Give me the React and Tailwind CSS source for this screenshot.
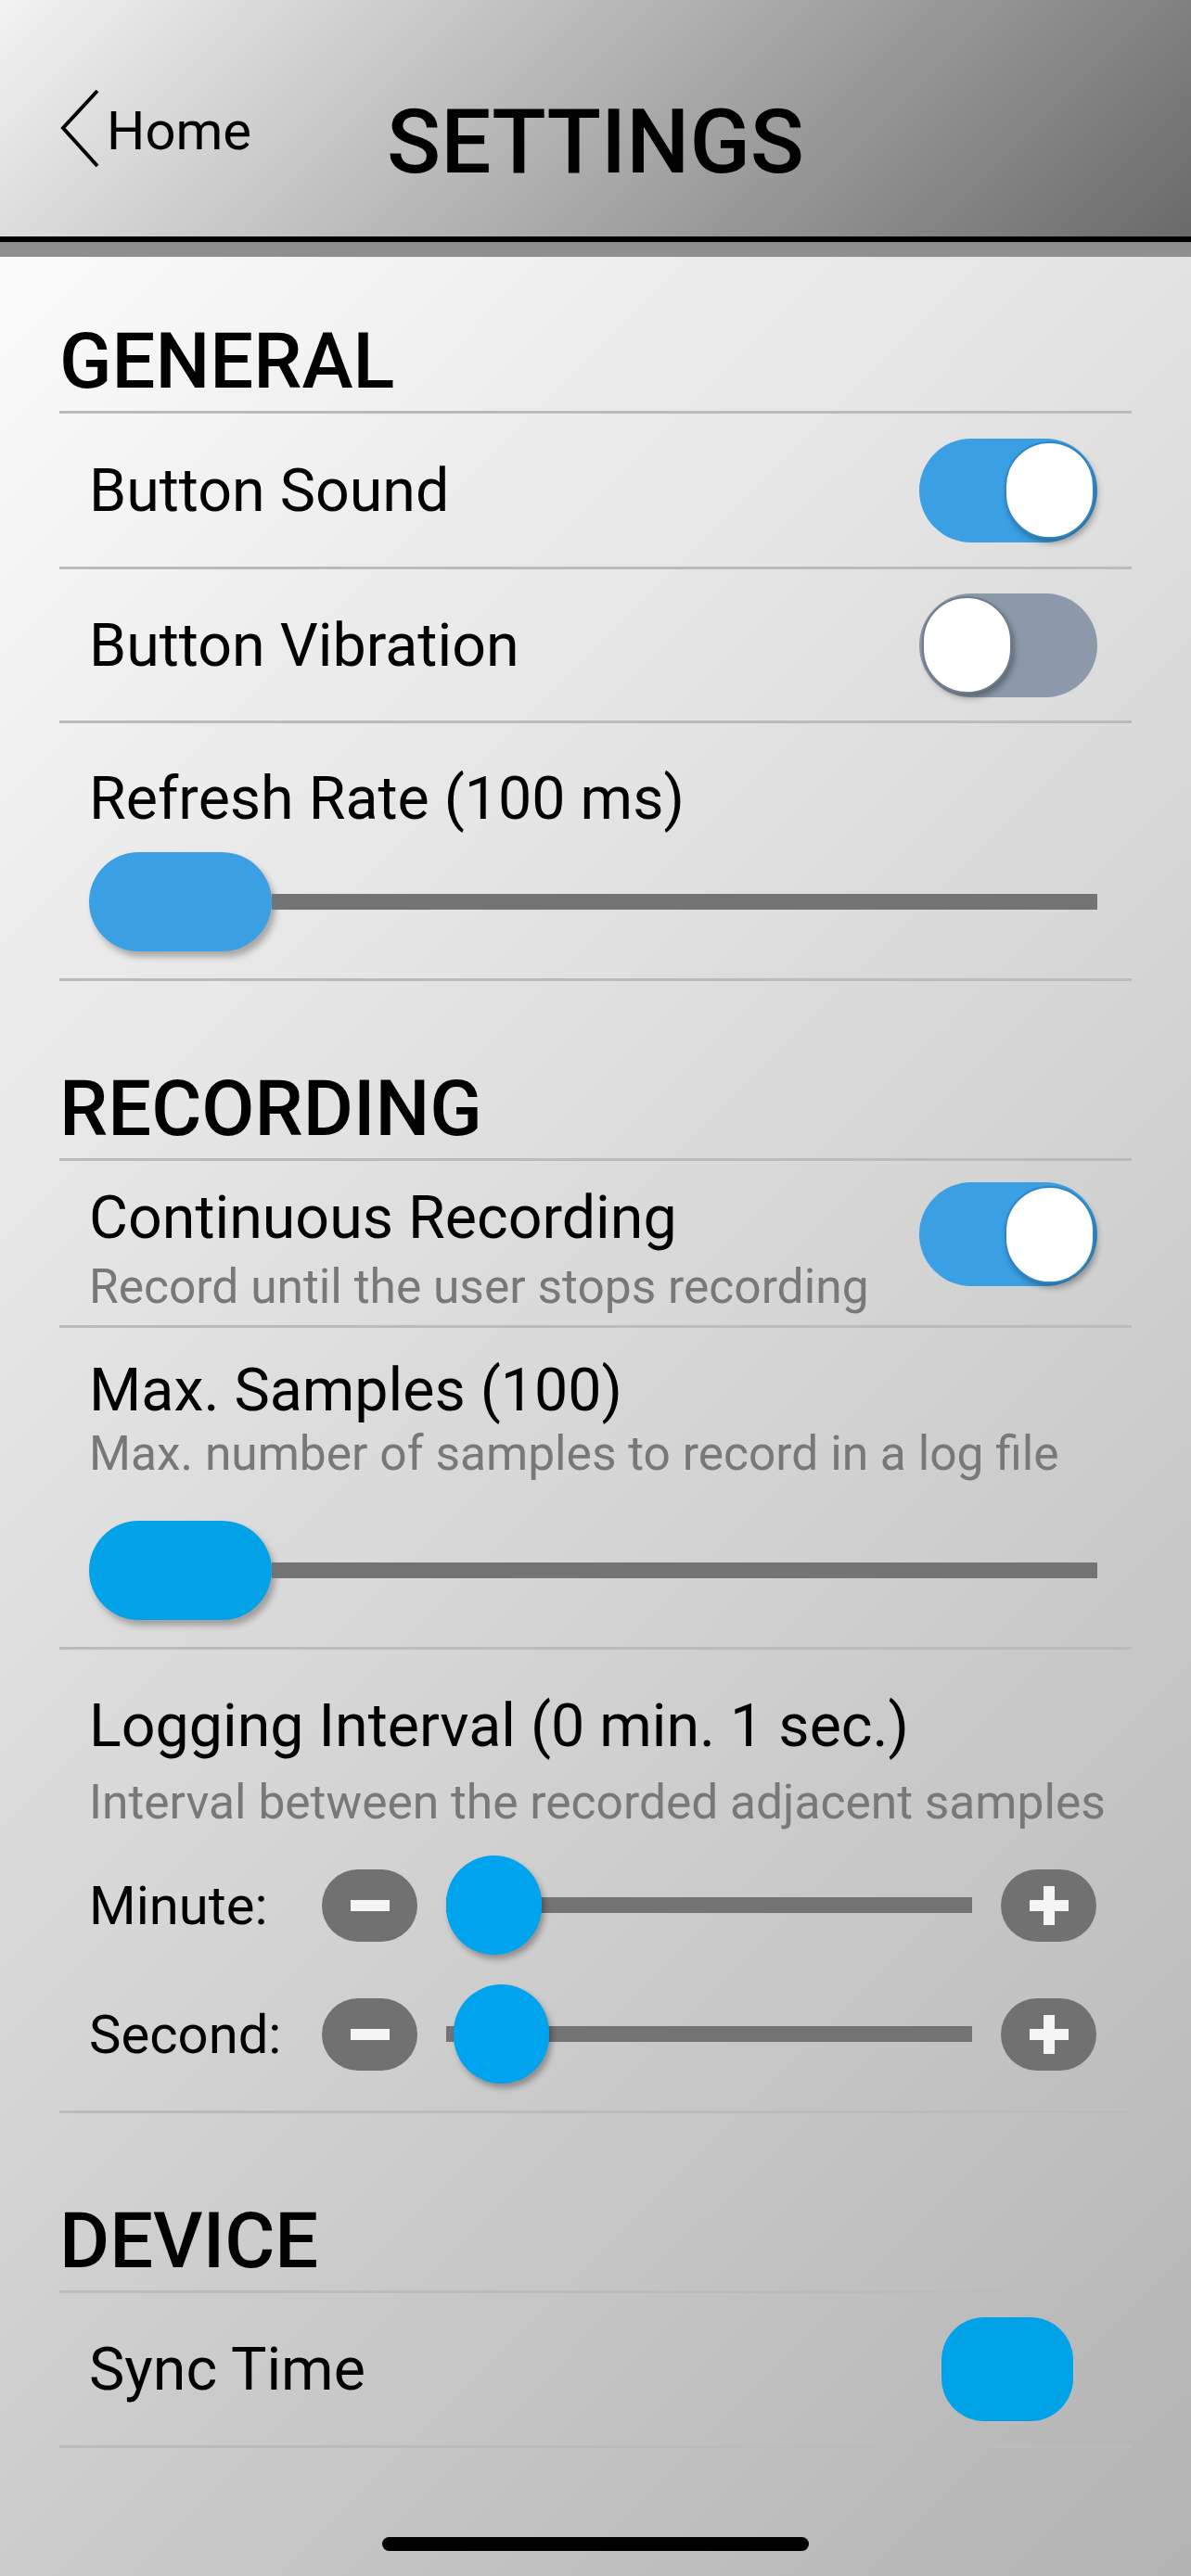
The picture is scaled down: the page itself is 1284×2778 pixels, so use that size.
import React from 'react'

function Toggle({ on }) {
    return (
        <div
            className={`flex h-[112px] w-[192px] shrink-0 items-center rounded-full px-[3px] ${
                on ? 'justify-end bg-[#3a9fe3]' : 'justify-start bg-[#8b99ab]'
            }`}
        >
            <div
                className={`h-[105px] w-[97px] rounded-full border-2 bg-white shadow-[3px_5px_6px_rgba(0,0,0,0.3)] ${
                    on ? 'border-[#2f86c6]' : 'border-[#6d7b8d]'
                }`}
            />
        </div>
    )
}

function WideSlider({ thumb }) {
    return (
        <div className="flex items-center pl-[32px] pr-[37px]">
            <div className={`h-[107px] w-[197px] shrink-0 rounded-full shadow-[4px_6px_7px_rgba(0,0,0,0.28)] ${thumb}`} />
            <div className="h-[17px] flex-1 bg-[#737373]" />
        </div>
    )
}

function StepButton({ plus }) {
    return (
        <div className="flex h-[78px] w-[103px] shrink-0 items-center justify-center rounded-full bg-[#717171]">
            <svg width="42" height="42" viewBox="0 0 42 42">
                <rect x="0" y="15" width="42" height="12" fill="#f5f5f5" />
                {plus && <rect x="15" y="0" width="12" height="42" fill="#f5f5f5" />}
            </svg>
        </div>
    )
}

function StepRow({ label, thumbPos }) {
    return (
        <div className="flex h-[107px] items-center pl-[32px] pr-[38px]">
            <span className="w-[251px] shrink-0 text-[58px] leading-[58px]">{label}</span>
            <StepButton />
            <div className="relative mx-[31px] flex h-full flex-1 items-center">
                <div className="h-[17px] w-full bg-[#737373]" />
                {/* thumb sits over the track */}
                <div className={`absolute top-0 h-[107px] w-[103px] rounded-full bg-[#00a3ee] shadow-[3px_5px_6px_rgba(0,0,0,0.3)] ${thumbPos}`} />
            </div>
            <StepButton plus />
        </div>
    )
}

function SectionHeading({ children, className = '' }) {
    return (
        <h2 className={`border-b-[3px] border-[#bbbbbb] pb-[12px] text-[83px] font-medium leading-[82px] ${className}`}>
            {children}
        </h2>
    )
}

export default function App() {
    return (
        <div className="flex min-h-[2778px] w-[1284px] flex-col font-[Roboto,'Liberation_Sans',sans-serif] text-black">
            {/* Header */}
            <header className="grid h-[255px] grid-cols-[1fr_auto_1fr] bg-[linear-gradient(135deg,#f3f3f3,#6a6a6a)]">
                <div className="flex items-center gap-[7px] self-start pl-[64px] pt-[96px]">
                    <svg width="44" height="86" viewBox="0 0 44 86" fill="none" stroke="#000" strokeWidth="4">
                        <polyline points="41,2 4,42 41,83" />
                    </svg>
                    <span className="mt-[3px] text-[58px] leading-none">Home</span>
                </div>
                <h1 className="pt-[105px] text-[96px] font-medium leading-none">SETTINGS</h1>
                <div />
            </header>
            <div className="h-[6px] bg-black" />
            <div className="h-[16px] bg-[#8f8f8f]" />

            {/* Content */}
            <main className="flex flex-1 flex-col bg-[linear-gradient(135deg,#fbfbfb,#b3b3b3)] px-[64px] pt-[72px] pb-[25px]">
                <SectionHeading>GENERAL</SectionHeading>

                <div className="flex h-[168px] items-center justify-between border-b-[3px] border-[#bbbbbb] pl-[32px] pr-[37px]">
                    <span className="text-[64.5px] leading-[64px]">Button Sound</span>
                    <Toggle on />
                </div>
                <div className="flex h-[166px] items-center justify-between border-b-[3px] border-[#bbbbbb] pl-[32px] pr-[37px]">
                    <span className="text-[64.5px] leading-[64px]">Button Vibration</span>
                    <Toggle on={false} />
                </div>
                <div className="flex h-[278px] flex-col border-b-[3px] border-[#bbbbbb] pt-[49px]">
                    <span className="pl-[32px] text-[64.5px] leading-[64px]">Refresh Rate (100 ms)</span>
                    <div className="mt-[26px]">
                        <WideSlider thumb="bg-[#3ba0e3]" />
                    </div>
                </div>

                <SectionHeading className="mt-[97px]">RECORDING</SectionHeading>

                <div className="flex h-[180px] items-start justify-between border-b-[3px] border-[#bbbbbb] pl-[32px] pr-[37px] pt-[29px]">
                    <div className="flex flex-col">
                        <span className="text-[64.5px] leading-[64px]">Continuous Recording</span>
                        <span className="mt-[18px] text-[51.5px] leading-[50px] text-[#787878]">Record until the user stops recording</span>
                    </div>
                    <div className="-mt-[6px]">
                        <Toggle on />
                    </div>
                </div>
                <div className="flex h-[347px] flex-col border-b-[3px] border-[#bbbbbb] pt-[35px]">
                    <span className="pl-[32px] text-[64.5px] leading-[64px]">Max. Samples (100)</span>
                    <span className="mt-[12px] pl-[32px] text-[51.5px] leading-[50px] text-[#787878]">Max. number of samples to record in a log file</span>
                    <div className="mt-[47px]">
                        <WideSlider thumb="bg-[#02a2e9]" />
                    </div>
                </div>
                <div className="flex h-[500px] flex-col border-b-[3px] border-[#bbbbbb] pt-[50px]">
                    <span className="pl-[32px] text-[64.5px] leading-[64px]">Logging Interval (0 min. 1 sec.)</span>
                    <span className="mt-[26px] pl-[32px] text-[51.5px] leading-[50px] text-[#787878]">Interval between the recorded adjacent samples</span>
                    <div className="mt-[32px]">
                        <StepRow label="Minute:" thumbPos="left-0" />
                    </div>
                    <div className="mt-[32px]">
                        <StepRow label="Second:" thumbPos="left-[8px]" />
                    </div>
                </div>

                <SectionHeading className="mt-[97px]">DEVICE</SectionHeading>

                <div className="flex h-[167px] items-center justify-between border-b-[3px] border-[#bbbbbb] pl-[32px] pr-[63px]">
                    <span className="text-[64.5px] leading-[64px]">Sync Time</span>
                    <div className="h-[112px] w-[142px] rounded-[46px] bg-[#00a2e8]" />
                </div>

                {/* Home indicator */}
                <div className="mx-auto mt-[96px] h-[15px] w-[460px] rounded-full bg-black" />
            </main>
        </div>
    )
}
